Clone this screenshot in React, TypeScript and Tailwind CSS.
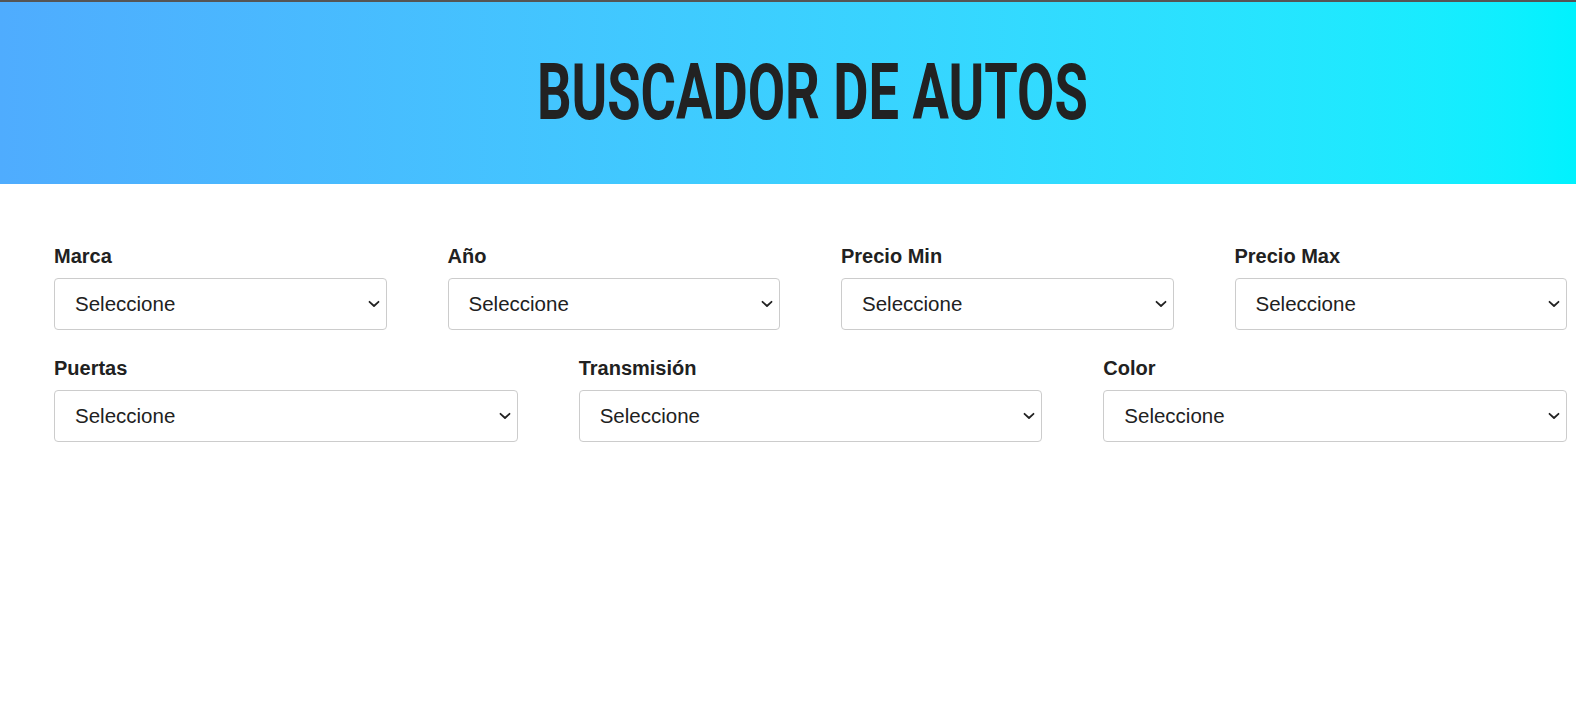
import React from 'react';

const Field: React.FC<{ label: string }> = ({ label }) => (
  <div className="flex flex-col">
    <label className="mb-[11px] text-[20px] font-bold leading-[22px] text-[#212121]">{label}</label>
    <div className="relative">
      <select className="h-[52px] w-full appearance-none rounded-[4px] border border-[#cccccc] bg-white pl-[20px] pr-10 text-[20.5px] text-[#212121] outline-none">
        <option>Seleccione</option>
      </select>
      <svg
        className="pointer-events-none absolute right-[7px] top-1/2 -translate-y-1/2"
        width="12"
        height="8"
        viewBox="0 0 12 8"
        fill="none"
      >
        <path d="M1.5 1.8 6 6 10.5 1.8" stroke="#222" strokeWidth="1.8" strokeLinecap="round" strokeLinejoin="round" />
      </svg>
    </div>
  </div>
);

export default function App() {
  const rowOne = ['Marca', 'Año', 'Precio Min', 'Precio Max'];
  const rowTwo = ['Puertas', 'Transmisión', 'Color'];

  return (
    <div className="min-h-[709px] bg-white font-['Liberation_Sans',Arial,sans-serif]">
      <header className="flex h-[184px] items-center justify-center border-t-2 border-[#555555] bg-gradient-to-r from-[#4facfe] to-[#00f2fe] pl-[48px]">
        <h1 className="inline-block origin-center scale-x-[0.695] font-['Roboto',sans-serif] text-[78px] font-bold leading-none text-[#222222]">
          BUSCADOR DE AUTOS
        </h1>
      </header>

      <main className="ml-[54px] w-[1513px] pt-[61px]">
        <div className="grid grid-cols-4 gap-x-[61px]">
          {rowOne.map((l) => (
            <Field key={l} label={l} />
          ))}
        </div>
        <div className="mt-[27px] grid grid-cols-3 gap-x-[61px]">
          {rowTwo.map((l) => (
            <Field key={l} label={l} />
          ))}
        </div>
      </main>
    </div>
  );
}
